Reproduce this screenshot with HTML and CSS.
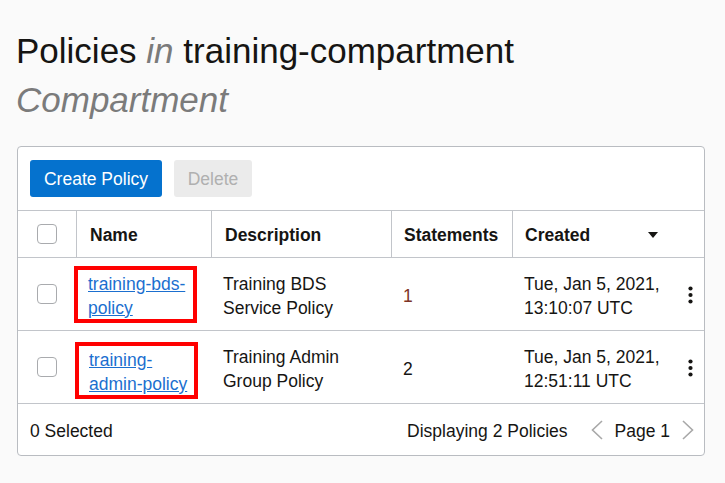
FILE: index.html
```html
<!DOCTYPE html>
<html>
<head>
<meta charset="utf-8">
<link rel="stylesheet" href="styles.css">
</head>
<body>
<h1 class="title">Policies <em class="muted">in</em> training-compartment <em class="muted">Compartment</em></h1>
<div class="card">
  <div class="toolbar">
    <button class="btn btn-primary">Create Policy</button>
    <button class="btn btn-disabled">Delete</button>
  </div>
  <table class="grid">
    <colgroup>
      <col class="c1"><col class="c2"><col class="c3"><col class="c4"><col class="c5">
    </colgroup>
    <thead>
      <tr>
        <th class="chk"><span class="box"></span></th>
        <th>Name</th>
        <th>Description</th>
        <th class="tight">Statements</th>
        <th class="tight"><div class="sort">Created<span class="tri"></span></div></th>
      </tr>
    </thead>
    <tbody>
      <tr>
        <td class="chk"><span class="box"></span></td>
        <td class="namecell"><div class="mark"><a href="#">training-bds-<br>policy</a></div></td>
        <td>Training BDS<br>Service Policy</td>
        <td class="tight num red">1</td>
        <td class="tight"><div class="created"><span>Tue, Jan 5, 2021,<br>13:10:07 UTC</span><svg class="kebab" width="5" height="18" viewBox="0 0 5 18"><circle cx="2.5" cy="2.5" r="2.1"/><circle cx="2.5" cy="9" r="2.1"/><circle cx="2.5" cy="15.5" r="2.1"/></svg></div></td>
      </tr>
      <tr>
        <td class="chk"><span class="box"></span></td>
        <td class="namecell"><div class="mark mark2"><a href="#">training-<br>admin-policy</a></div></td>
        <td>Training Admin<br>Group Policy</td>
        <td class="tight num">2</td>
        <td class="tight"><div class="created"><span>Tue, Jan 5, 2021,<br>12:51:11 UTC</span><svg class="kebab" width="5" height="18" viewBox="0 0 5 18"><circle cx="2.5" cy="2.5" r="2.1"/><circle cx="2.5" cy="9" r="2.1"/><circle cx="2.5" cy="15.5" r="2.1"/></svg></div></td>
      </tr>
    </tbody>
  </table>
  <div class="footer">
    <span>0 Selected</span>
    <div class="pager">
      <span class="count">Displaying 2 Policies</span>
      <svg class="chev" width="12" height="20" viewBox="0 0 12 20"><polyline points="11,1 1.5,10 11,19"/></svg>
      <span class="page">Page 1</span>
      <svg class="chev" width="12" height="20" viewBox="0 0 12 20"><polyline points="1,1 10.5,10 1,19"/></svg>
    </div>
  </div>
</div>
</body>
</html>
```
FILE: styles.css
```css
html, body {
  margin: 0;
  padding: 0;
  background: #fafafa;
}
body {
  font-family: "Liberation Sans", Arial, sans-serif;
  color: #161513;
  font-size: 17.5px;
}
.title {
  margin: 26px 0 0 0;
  padding-left: 16px;
  width: 560px;
  font-size: 35px;
  font-weight: normal;
  line-height: 49px;
  color: #161513;
}
.muted {
  color: #7b7b7b;
}
.card {
  margin: 22px 0 0 17px;
  width: 688px;
  box-sizing: border-box;
  border: 1px solid #b9bcc1;
  border-radius: 4px;
  background: #fff;
}
.toolbar {
  display: flex;
  gap: 12px;
  padding: 13px 12px 13px 12px;
}
.btn {
  font-family: "Liberation Sans", Arial, sans-serif;
  font-size: 17.5px;
  height: 37px;
  border: none;
  border-radius: 3px;
  padding: 2px 0 0 0;
  white-space: nowrap;
  text-align: center;
}
.btn-primary {
  background: #0572ce;
  color: #fff;
  width: 132px;
}
.btn-disabled {
  background: #ebebeb;
  color: #b0b0b0;
  width: 78px;
}
.grid {
  width: 686px;
  table-layout: fixed;
  border-collapse: separate;
  border-spacing: 0;
}
.c1 { width: 58px; }
.c2 { width: 135px; }
.c3 { width: 180px; }
.c4 { width: 121px; }
.c5 { width: 192px; }
th {
  height: 48px;
  padding: 2px 0 0 13px;
  text-align: left;
  font-weight: bold;
  border-top: 1px solid #c2c5ca;
  border-bottom: 1px solid #c2c5ca;
  border-left: 1px solid #c2c5ca;
  box-sizing: border-box;
}
th.chk {
  border-left: none;
  padding-top: 0;
}
th.tight, td.tight {
  padding-left: 12px;
}
td {
  height: 73px;
  padding: 4px 0 0 12px;
  border-bottom: 1px solid #c2c5ca;
  line-height: 24px;
  vertical-align: middle;
  box-sizing: border-box;
}
.chk {
  padding: 0 0 0 19px;
}
td.chk {
  padding-left: 19px;
  padding-top: 0;
}
.box {
  display: block;
  width: 20px;
  height: 20px;
  box-sizing: border-box;
  border: 1px solid #a9abae;
  border-radius: 4px;
  background: #fff;
}
td.namecell {
  padding-left: 0;
  padding-top: 0;
  vertical-align: top;
}
.mark {
  width: 123px;
  height: 57px;
  box-sizing: border-box;
  border: 4px solid #ff0000;
  padding: 2px 0 0 10px;
  margin-left: -2px;
  margin-top: 8px;
  display: flex;
  align-items: center;
}
.mark2 {
  margin-top: 11px;
  margin-left: -1px;
}
.mark a {
  color: #1b6fcf;
  text-decoration: underline;
}
.num {
  padding-left: 15px;
}
.red {
  color: #7d3326;
}
.sort {
  display: flex;
  align-items: center;
  justify-content: space-between;
  padding-right: 46px;
}
.tri {
  width: 0;
  height: 0;
  border-left: 5px solid transparent;
  border-right: 5px solid transparent;
  border-top: 6px solid #161513;
}
.created {
  display: flex;
  align-items: center;
  justify-content: space-between;
  padding-right: 11px;
}
.kebab {
  fill: #161513;
  margin-top: -2px;
}
.footer {
  height: 51px;
  display: flex;
  align-items: center;
  justify-content: space-between;
  padding: 3px 10px 0 12px;
  box-sizing: border-box;
}
.pager {
  display: flex;
  align-items: center;
}
.count {
  margin-right: 23px;
}
.page {
  margin: 0 12px;
}
.chev {
  margin-top: -2px;
}
.chev polyline {
  fill: none;
  stroke: #a8a8a8;
  stroke-width: 1.6;
}
```
